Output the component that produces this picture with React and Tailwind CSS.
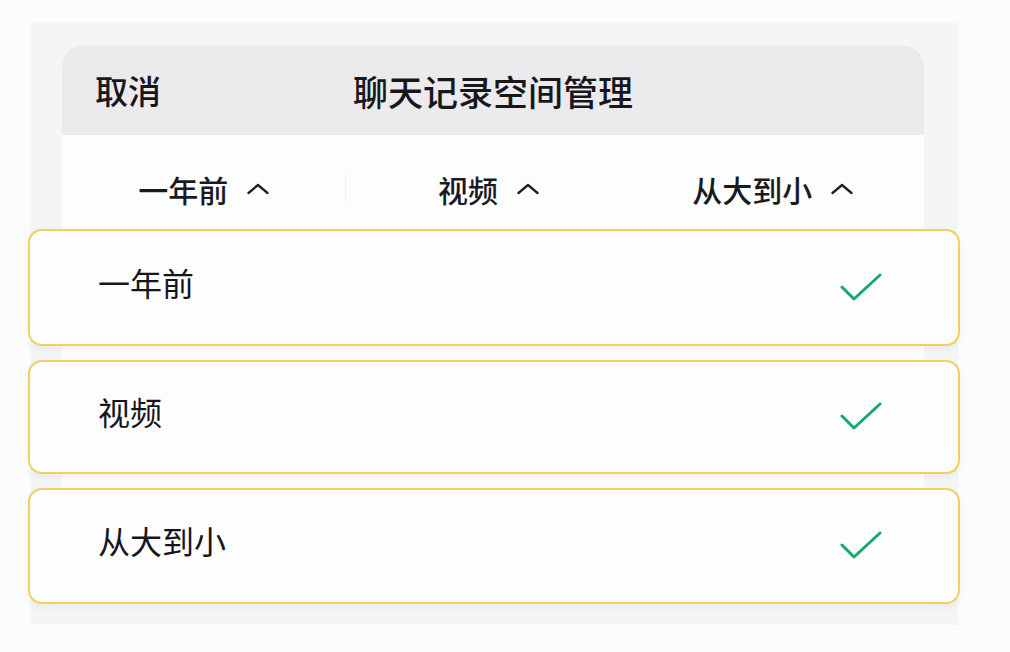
import React from "react";

const font = { fontFamily: '"Noto Sans CJK SC", "Noto Sans", sans-serif' };

function Chevron() {
  return (
    <svg width="22" height="12" viewBox="0 0 22 12" className="shrink-0">
      <polyline points="1.5,10 11,2 20.5,10" fill="none" stroke="#1f1f24" strokeWidth="2.3" strokeLinecap="round" strokeLinejoin="round" />
    </svg>
  );
}

function Check() {
  return (
    <svg width="42" height="30" viewBox="0 0 42 30">
      <polyline points="2,14 14,26 40,2" fill="none" stroke="#17a86c" strokeWidth="3" strokeLinecap="round" strokeLinejoin="round" />
    </svg>
  );
}

function Tab({ label }) {
  return (
    <div className="flex items-center justify-center gap-[19px]">
      <span className="text-[30px] font-medium leading-none text-[#1a1a1f]">{label}</span>
      <Chevron />
    </div>
  );
}

function Option({ label, h }) {
  return (
    <div
      className="flex items-center justify-between rounded-[14px] border-2 border-[#f2cf5e] bg-[#fdfdfe] pl-[68px] pr-[76px] shadow-[0_3px_8px_rgba(0,0,0,0.05)]"
      style={{ height: h }}
    >
      <span className="pb-[12px] text-[32px] leading-none text-[#16161a]">{label}</span>
      <Check />
    </div>
  );
}

export default function App() {
  return (
    <div className="h-[652px] w-[1010px] overflow-hidden bg-[#fbfcfd] pl-[30px] pt-[22px]" style={font}>
      <div className="relative h-[603px] w-[928px] bg-[#f4f5f7] pl-[32px] pt-[23px]">
        <div className="flex h-[560px] w-[862px] flex-col rounded-t-[22px] bg-[#fdfdfe]">
          <div className="relative flex h-[90px] items-center rounded-t-[22px] bg-[#ebebed] px-[33px]">
            <span className="text-[33px] font-medium leading-none text-[#18181c]">取消</span>
            <span className="absolute left-1/2 top-1/2 -translate-x-1/2 -translate-y-1/2 whitespace-nowrap text-[35px] font-medium leading-none text-[#18181c]">
              聊天记录空间管理
            </span>
          </div>
          <div className="grid h-[90px] grid-cols-3 items-center pr-[9px] pt-[18px]">
            <div className="border-r border-[#f1f2f4]"><Tab label="一年前" /></div>
            <Tab label="视频" />
            <Tab label="从大到小" />
          </div>
        </div>
        <div className="absolute left-[-2px] top-[207px] flex w-[932px] flex-col gap-[14px]">
          <Option label="一年前" h={117} />
          <Option label="视频" h={114} />
          <Option label="从大到小" h={116} />
        </div>
      </div>
    </div>
  );
}
